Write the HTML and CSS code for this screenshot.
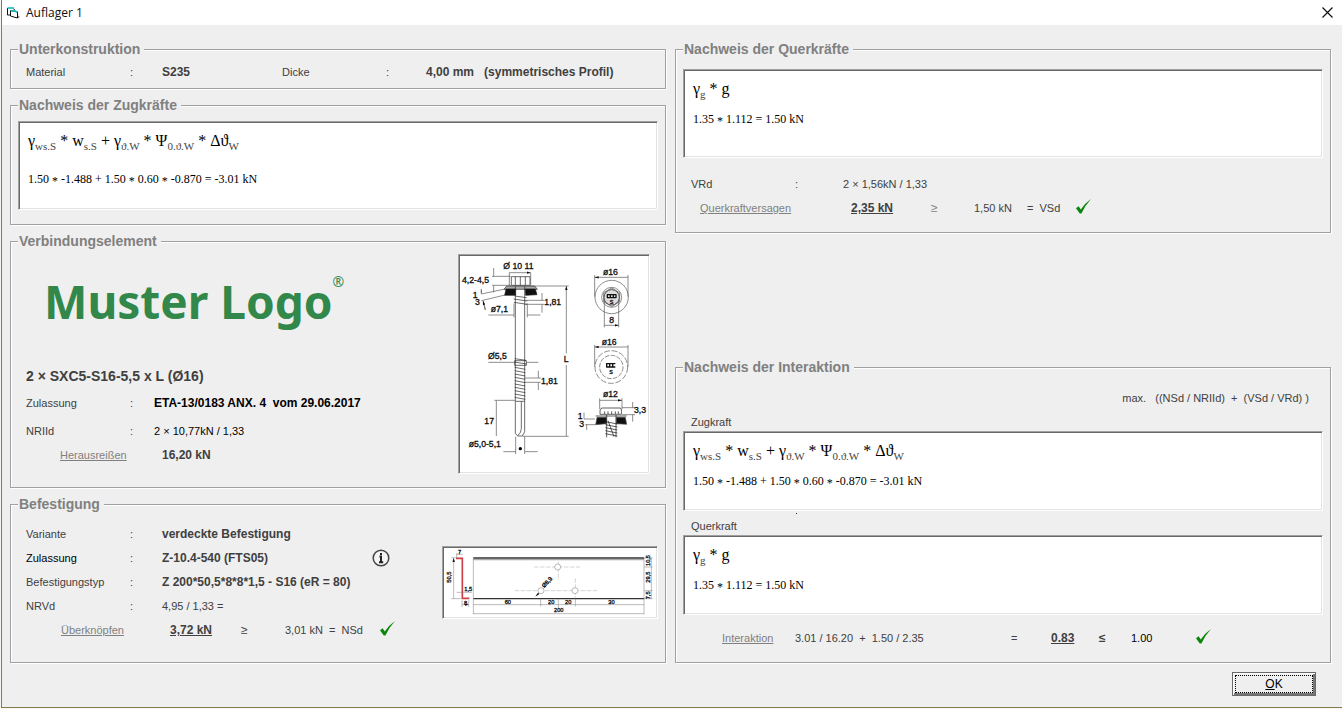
FILE: index.html
```html
<!DOCTYPE html>
<html lang="de">
<head>
<meta charset="utf-8">
<title>Auflager 1</title>
<link rel="stylesheet" href="styles.css">
</head>
<body>
<svg class="defs" aria-hidden="true">
  <defs>
    <symbol id="check" viewBox="0 0 15 15"><path d="M0 9.200 2.600 7.200 4.800 10.600 Q8.500 4.500 15 0 Q9 6.500 5.400 14.500H3.800Z" fill="#0a860a"/></symbol>
    <marker id="arrow" viewBox="0 0 10 6" refX="10" refY="3" markerWidth="12" markerHeight="8" markerUnits="userSpaceOnUse" orient="auto-start-reverse"><path d="M0 0 10 3 0 6Z" fill="#111"/></marker>
  </defs>
</svg>
<div class="window">
  <header class="titlebar">
    <svg class="app-icon" viewBox="0 0 13 12" aria-hidden="true">
      <path d="M.5 1V8H3.500M6.500 1.500 8 3.500" fill="none" stroke="#111"/>
      <path d="M.5 1H7" stroke="#00b8c0" stroke-width="1.500"/>
      <path d="M3.500 3.500V9L5 9.500 10.500 11V5L3.500 3.500" fill="#fff" stroke="#111"/>
      <path d="M3.500 3.500 10.500 4.800" stroke="#00b8c0" stroke-width="1.500"/>
      <path d="M11 8.500 13 10 11 11.500Z" fill="#888"/>
    </svg>
    <h1 class="title">Auflager 1</h1>
    <button class="close" type="button" aria-label="Schließen"><svg viewBox="0 0 11 11"><path d="M.5.5 10.500 10.500M10.500.5.5 10.500" stroke="#111" stroke-width="1.200"/></svg></button>
  </header>

  <main class="columns">
    <div class="column">
      <fieldset class="group group-base">
        <legend>Unterkonstruktion</legend>
        <div class="row cols-base">
          <span>Material</span><span>:</span><b>S235</b><span>Dicke</span><span>:</span><b>4,00 mm &nbsp; (symmetrisches Profil)</b>
        </div>
      </fieldset>

      <fieldset class="group group-tension">
        <legend>Nachweis der Zugkräfte</legend>
        <div class="sheet sheet-tall sheet-loose">
          <p class="formula"><span>γ<sub>ws.S</sub></span><i>*</i><span>w<sub>s.S</sub></span><i>+</i><span>γ<sub>ϑ.W</sub></span><i>*</i><span>Ψ<sub>0.ϑ.W</sub></span><i>*</i><span>Δϑ<sub>W</sub></span></p>
          <p class="numbers">1.50 <i>*</i> -1.488 + 1.50 <i>*</i> 0.60 <i>*</i> -0.870 = -3.01 kN</p>
        </div>
      </fieldset>

      <fieldset class="group group-screw">
        <legend>Verbindungselement</legend>
        <div class="split">
          <div class="details">
            <div class="logo">Muster Logo<sup>®</sup></div>
            <div class="product">2 × SXC5-S16-5,5 x L (Ø16)</div>
            <div class="row cols-approval"><span>Zulassung</span><span>:</span><b class="strong">ETA-13/0183 ANX. 4 &nbsp;vom 29.06.2017</b></div>
            <div class="row cols-approval"><span>NRIId</span><span>:</span><span class="strong">2 × 10,77kN / 1,33</span></div>
            <div class="row cols-tearout"><a href="#herausreissen">Herausreißen</a><b>16,20 kN</b></div>
          </div>
          <div class="drawing screw">
            <svg viewBox="30 18 564 648" role="img" aria-label="Maßzeichnung der Schraube">
              <g fill="none" stroke="#222" stroke-width="2">
                <path d="M184 80H240V106H184ZM196 80V106M211 80V106M226 80V106" fill="#fff"/>
                <path d="M170 108H254L262 118H162Z" fill="#aaa"/>
                <path d="M168 117H197V136H164ZM226 117H256L261 134 227 136Z" fill="#111"/>
                <path d="M196 110V550L203 558H217L224 545V110M214 455V535Q212 552 203 556M197 454H224"/>
                <path d="M194 332H229M194 332V346H229V332"/>
                <path d="M194 138 230 143M191 147 232 153M192 157 231 163M194 326 228 331M193 336 229 342M194 352 226 358M194 362 226 368M194 372 226 378M194 382 226 388M194 392 226 398M194 402 226 408M194 412 226 418M194 422 226 428M194 432 226 438M194 442 226 448"/>
              </g>
              <g fill="none" stroke="#555" stroke-width="2">
                <path d="M178 68V106M242 68V106M126 79H182M126 106H182M241 108H356M218 559H356M133 451H196M225 151H283M225 163H283M224 384H272M224 397H272M192 160V202M232 160V202M197 560V612M224 560V612M94 132 165 117M94 152 165 135M94 118V130M100 152 106 180"/>
                <path d="M349 108V558M139 452V558M178 68H242" marker-start="url(#arrow)" marker-end="url(#arrow)"/>
                <path d="M131 54V79M131 127V107M276 129V151M276 188V164M265 362V384M265 420V398M115 195H192M271 195H233M115 337H194M265 337H230M160 605H197M263 605H225M94 118V131M106 180 99 153" marker-end="url(#arrow)"/>
              </g>
              <circle cx="211" cy="596" r="5"/>
              <path d="M341 310H358V345H341Z" fill="#fff"/>
              <g fill="none" stroke="#555" stroke-width="2">
                <circle cx="485" cy="141" r="50"/><circle cx="485" cy="142" r="30"/><path d="M485 114 509 128V155L485 170 461 155V128Z" fill="#ddd"/>
                <circle cx="485" cy="142" r="23" stroke-width="3"/>
                <path d="M434 75V140M534 75V140M463 150V232M506 150V232"/>
                <path d="M434 82H534M463 226H506" marker-start="url(#arrow)" marker-end="url(#arrow)"/>
                <circle cx="484" cy="351" r="49" stroke-dasharray="18 5"/><circle cx="484" cy="351" r="35" stroke-dasharray="14 4"/>
                <path d="M434 285V350M534 285V350"/><path d="M434 291H534M449 451H516" marker-start="url(#arrow)" marker-end="url(#arrow)"/>
                <path d="M449 445V478M516 445V478M516 473H555M516 494H555M548 456V473M548 515V494M402 488V506M410 540V523M402 507H435M406 524H437"/>
                <path d="M455 474H510Q516 474 514 493H450Q448 478 455 474ZM464 484V492M474 484V492M485 484V492M496 484V492M505 484V492" fill="#fff" stroke="#111"/>
                <path d="M437 498H530" stroke="#111"/><path d="M441 502H469V521L437 524ZM499 502H526L530 523 499 521Z" fill="#111"/>
                <path d="M470 495V562M498 495V562M466 515 502 522M466 524 502 531M466 533 502 540M466 542 502 549M466 551 502 558M474 512 492 560" stroke="#111"/>
              </g>
              <path d="M471 134H498M471 143H498M472 133V144M481 133V144M490 133V144M498 133V144M469 341H496M469 351H496M470 340V352M479 341V351M488 341V351" stroke="#111" stroke-width="4" fill="none"/>
              <g class="dims">
                <text x="160" y="58">Ø 10 11</text><text x="36" y="100">4,2-4,5</text><text x="68" y="143">1</text><text x="75" y="165">3</text>
                <text x="283" y="165">1,81</text><text x="122" y="186">ø7,1</text><text x="114" y="328">Ø5,5</text><text x="341" y="337">L</text>
                <text x="273" y="402">1,81</text><text x="103" y="521">17</text><text x="56" y="591">ø5,0-5,1</text>
                <text x="459" y="74">ø16</text><text x="478" y="220">8</text><text x="455" y="284">ø16</text><text x="459" y="442">ø12</text>
                <text x="552" y="490">3,3</text><text x="383" y="507">1</text><text x="388" y="532">3</text>
                <text class="tiny" x="479" y="161">S</text><text class="tiny" x="478" y="371">S</text>
              </g>
            </svg>
          </div>
        </div>
      </fieldset>

      <fieldset class="group group-fixing">
        <legend>Befestigung</legend>
        <div class="split">
          <div class="details">
            <div class="row cols-fixing"><span>Variante</span><span>:</span><b>verdeckte Befestigung</b></div>
            <div class="row cols-fixing"><span class="strong">Zulassung</span><span>:</span><b>Z-10.4-540 (FTS05)</b>
              <button class="info" type="button" aria-label="Information"><svg viewBox="0 0 18 18"><circle cx="9" cy="9" r="7.800" fill="#f4f4f4" stroke="#444" stroke-width="1.500"/><path d="M9 4V6M7.500 7.500H9V13M7 13.200H11.200" fill="none" stroke="#222" stroke-width="2"/></svg></button></div>
            <div class="row cols-fixing"><span>Befestigungstyp</span><span>:</span><b>Z 200*50,5*8*8*1,5 - S16 (eR = 80)</b></div>
            <div class="row cols-fixing"><span>NRVd</span><span>:</span><span>4,95 / 1,33 =</span></div>
            <div class="row cols-pull"><a href="#ueberknoepfen">Überknöpfen</a><b class="result">3,72 kN</b><span class="relation">≥</span><span>3,01 kN &nbsp;=&nbsp; NSd</span><svg class="check" role="img" aria-label="erfüllt"><use href="#check"/></svg></div>
          </div>
          <div class="drawing profile">
            <svg viewBox="42 31 636 203" role="img" aria-label="Maßzeichnung des Profils">
              <path d="M130 59H642M130 181H642" stroke="#333" stroke-width="4"/>
              <path d="M130 64H642" stroke="#aaa" stroke-width="4"/>
              <path d="M78 60H97V180H118" fill="none" stroke="#cf3f48" stroke-width="5"/>
              <g fill="none" stroke="#777" stroke-width="1.500">
                <path d="M130 58V228M642 58V228M64 58H77M64 181H92M96 186V206M116 186V206M80 162H126M642 59H668M642 86H668M642 157H668M642 181H668M385 181V210M436 181V204M332 181V204"/>
                <path d="M312 86H450M254 157H502M385 70V125M436 120V180" stroke="#aaa" stroke-dasharray="14 4"/>
                <path d="M71 59V180M130 199H332M332 199H385M385 199H436M436 199H642M130 226H642M664 59V86M664 86V157M664 157V181M96 199H116" marker-start="url(#arrow)" marker-end="url(#arrow)"/>
                <path d="M318 172 370 121"/><path d="M80 48H98M80 44V60"/>
                <circle cx="383" cy="86" r="9" fill="#fff"/><circle cx="333" cy="157" r="9" fill="#fff"/><circle cx="435" cy="157" r="9" fill="#fff"/>
              </g>
              <path d="M316 175 324 163 328 167Z"/>
              <g class="dims small">
                <text x="224" y="197">60</text><text x="354" y="197">20</text><text x="405" y="197">20</text><text x="535" y="197">30</text><text x="372" y="221">200</text>
                <text x="84" y="47">7</text><text x="103" y="158">1,5</text><text x="102" y="199">8</text>
                <text transform="translate(63 133) rotate(-90)">50,5</text><text transform="translate(661 83) rotate(-90)">10,5</text><text transform="translate(661 133) rotate(-90)">29,5</text><text transform="translate(661 183) rotate(-90)">7,5</text>
                <text transform="translate(343 149) rotate(-48)">Ø8,9</text>
              </g>
            </svg>
          </div>
        </div>
      </fieldset>
    </div>

    <div class="column column-right">
      <fieldset class="group group-shear">
        <legend>Nachweis der Querkräfte</legend>
        <div class="sheet sheet-tall">
          <p class="formula"><span>γ<sub>g</sub></span><i>*</i><span>g</span></p>
          <p class="numbers">1.35 <i>*</i> 1.112 = 1.50 kN</p>
        </div>
        <div class="shear-rows">
          <div class="row cols-shear"><span>VRd</span><span>:</span><span>2 × 1,56kN / 1,33</span></div>
          <div class="row cols-shear-result"><a href="#querkraftversagen">Querkraftversagen</a><b class="result">2,35 kN</b><span class="relation faint">≥</span><span>1,50 kN</span><span>=&nbsp; VSd</span><svg class="check" role="img" aria-label="erfüllt"><use href="#check"/></svg></div>
        </div>
      </fieldset>

      <fieldset class="group group-interaction">
        <legend>Nachweis der Interaktion</legend>
        <div class="row maximum">max. &nbsp; ((NSd / NRIId) &nbsp;+&nbsp; (VSd / VRd) )</div>
        <h2 class="caption">Zugkraft</h2>
        <div class="sheet">
          <p class="formula"><span>γ<sub>ws.S</sub></span><i>*</i><span>w<sub>s.S</sub></span><i>+</i><span>γ<sub>ϑ.W</sub></span><i>*</i><span>Ψ<sub>0.ϑ.W</sub></span><i>*</i><span>Δϑ<sub>W</sub></span></p>
          <p class="numbers">1.50 <i>*</i> -1.488 + 1.50 <i>*</i> 0.60 <i>*</i> -0.870 = -3.01 kN</p>
        </div>
        <div class="speck"></div>
        <h2 class="caption">Querkraft</h2>
        <div class="sheet">
          <p class="formula"><span>γ<sub>g</sub></span><i>*</i><span>g</span></p>
          <p class="numbers">1.35 <i>*</i> 1.112 = 1.50 kN</p>
        </div>
        <div class="row cols-interaction"><a href="#interaktion">Interaktion</a><span>3.01 / 16.20 &nbsp;+&nbsp; 1.50 / 2.35</span><span>=</span><b class="result">0.83</b><b class="relation">≤</b><span class="strong">1.00</span><svg class="check" role="img" aria-label="erfüllt"><use href="#check"/></svg></div>
      </fieldset>
    </div>
  </main>

  <footer class="actions"><button class="ok" type="button"><span><u>O</u>K</span></button></footer>
</div>
</body>
</html>
```
FILE: styles.css
```css
* { box-sizing: border-box; }

body {
  margin: 0;
  background: #f6f5f0;
  color: #404040;
  font: 12px/16px "Liberation Sans", Arial, sans-serif;
}

.defs { display: block; width: 0; height: 0; }

.window {
  display: flex;
  flex-direction: column;
  min-height: calc(100vh - 1px);
  margin: 0 0 1px 1px;
  border: solid #857a50;
  border-width: 0 0 1px 1px;
  background: #efefef;
}

.titlebar {
  display: flex;
  align-items: center;
  gap: 6px;
  height: 25px;
  padding: 0 7px 0 5px;
  background: #fff;
}

.app-icon { width: 13px; height: 12px; }

.title {
  flex: 1;
  margin: 0;
  color: #111;
  font: 12px/16px "Open Sans", "Noto Sans", sans-serif;
}

.close {
  display: flex;
  padding: 2px;
  border: 0;
  background: none;
}

.close svg { width: 11px; height: 11px; }

.columns {
  display: grid;
  grid-template-columns: 1fr 1fr;
  gap: 9px;
  padding: 16px 11px 0 8px;
}

.column {
  display: flex;
  flex-direction: column;
  gap: 8px;
  min-width: 0;
}

.column-right { justify-content: space-between; }

.group {
  min-width: 0;
  margin: 0;
  padding: 0 7px;
  border: 1px solid #a0a0a0;
  box-shadow: 1px 1px 0 #fff, inset 1px 1px 0 #fff;
}

.group legend {
  padding: 0 4px 0 1px;
  background: #efefef;
  color: #808080;
  font-size: 14px;
  font-weight: bold;
}

.group-base { padding-top: 3px; padding-bottom: 4px; }
.group-tension { padding-top: 8px; padding-bottom: 14px; }
.group-screw { padding-top: 5px; padding-bottom: 13px; }
.group-fixing { padding-top: 10px; padding-bottom: 20px; }
.group-shear { padding-top: 12px; padding-bottom: 12px; }
.group-interaction { padding-top: 11px; padding-bottom: 12px; }

.row {
  display: grid;
  align-items: center;
  height: 24px;
  padding-left: 8px;
  font-size: 11px;
  white-space: pre;
}

.row b { font-size: 12px; }
.row a { color: #808080; }
.row .result { text-decoration: underline; }
.strong { color: #000; }
.relation { font-size: 12px; }
.faint { color: #808080; }

.cols-base { grid-template-columns: 104px 32px 120px 104px 40px 1fr; }
.cols-approval { grid-template-columns: 104px 24px 1fr; }
.cols-tearout { grid-template-columns: 102px 1fr; padding-left: 42px; }
.cols-fixing { grid-template-columns: 104px 32px 210px 1fr; }
.cols-pull { grid-template-columns: 109px 71px 44px 95px 1fr; padding-left: 43px; }
.cols-shear { grid-template-columns: 104px 48px 1fr; }
.cols-shear-result { grid-template-columns: 151px 80px 43px 53px 49px 1fr; padding-left: 17px; }
.cols-interaction { grid-template-columns: 73px 216px 40px 48px 32px 65px 1fr; padding-left: 39px; }

.check {
  width: 15px;
  height: 15px;
  margin-bottom: 4px;
}

.info {
  display: flex;
  width: 18px;
  padding: 0;
  border: 0;
  background: none;
}

.info svg { width: 18px; height: 18px; }

.sheet {
  display: flex;
  flex-direction: column;
  gap: 12px;
  height: 80px;
  padding: 9px;
}

.sheet,
.drawing {
  border: 1px solid;
  border-color: #a0a0a0 #fff #fff #a0a0a0;
  background: #fff;
  box-shadow: inset 1px 1px 0 #696969, inset -1px -1px 0 #e3e3e3;
}

.sheet-tall { height: 89px; }
.sheet-loose { gap: 20px; }

.sheet p {
  margin: 0;
  color: #000;
  font-family: "Liberation Serif", "Times New Roman", serif;
  white-space: nowrap;
}

.sheet i { font-style: normal; }

.formula {
  display: flex;
  gap: 4px;
  height: 20px;
  font-size: 16px;
  line-height: 20px;
}

.formula sub {
  font-size: 11px;
  line-height: 0;
  color: #444;
}

.sheet .numbers { font-size: 12px; line-height: 16px; }

.numbers i {
  line-height: 0;
  vertical-align: -2px;
}

.split {
  display: flex;
  align-items: flex-start;
  justify-content: space-between;
}

.details { flex: 1; }

.logo {
  padding: 15px 0 0 26px;
  color: #32884a;
  font: bold 46px/64px "Noto Sans", "Open Sans", sans-serif;
  white-space: nowrap;
}

.logo sup {
  font-size: 14px;
  font-weight: normal;
  line-height: 0;
  vertical-align: 32px;
}

.product {
  padding: 35px 0 3px 8px;
  font-size: 14px;
  font-weight: bold;
}

.group-screw .row { margin-top: 4px; }
.group-screw .cols-tearout { margin-top: 0; }

.drawing { padding: 1px; }
.drawing svg { display: block; width: 100%; height: 100%; }
.screw { width: 192px; height: 220px; margin-right: 8px; }
.profile { width: 216px; height: 73px; margin-top: 24px; }

.dims { font: 26px "Liberation Sans", Arial, sans-serif; fill: #111; stroke: #111; stroke-width: 1; }
.dims .tiny { font-size: 16px; }
.small { font-size: 17px; }

.shear-rows { padding-top: 14px; }

.maximum {
  justify-content: end;
  margin-bottom: 3px;
  padding-right: 14px;
}

.caption {
  margin: 0;
  padding: 2px 0 2px 8px;
  font-size: 11px;
  font-weight: normal;
  line-height: 14px;
}

.speck {
  width: 1px;
  height: 1px;
  margin: 2px 0 3px 113px;
  background: #333;
}

.group-interaction .cols-interaction { margin-top: 11px; }

.actions {
  display: flex;
  justify-content: flex-end;
  padding: 9px 26px 10px;
}

.ok {
  width: 84px;
  height: 24px;
  padding: 2px;
  border: 1px solid #696969;
  background: #efefef;
  box-shadow: inset 1px 1px 0 #fff, inset -2px -2px 0 #777;
  color: #000;
  font: 12px/16px "Liberation Sans", Arial, sans-serif;
}

.ok span { display: block; border: 1px dotted #000; }
```
